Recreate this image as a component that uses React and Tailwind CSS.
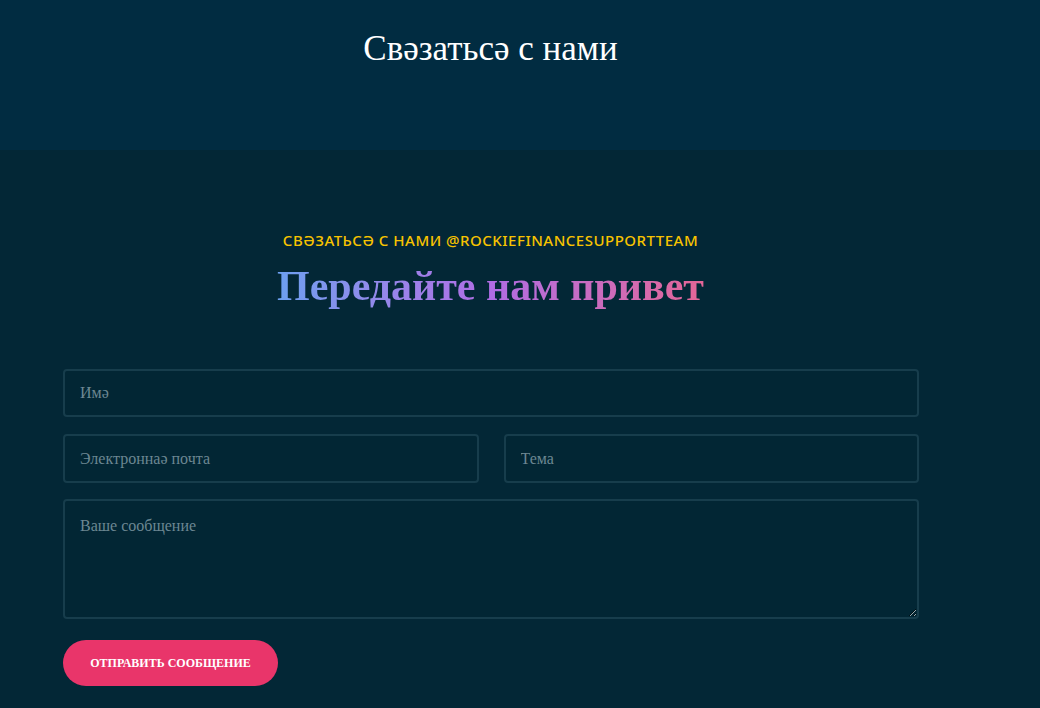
import React from "react";

export default function App() {
  const serif = { fontFamily: '"Liberation Serif", "Times New Roman", serif' };
  const field =
    "w-full rounded-[4px] border-2 border-[#173d4c] bg-[#022634] px-[15px] text-[16px] text-white placeholder:text-[#6c8792] outline-none";
  return (
    <div className="w-[1040px] h-[708px] overflow-hidden bg-[#032736]" style={serif}>
      <header className="h-[150px] w-full bg-[#012c41]">
        <div className="w-[981px] flex justify-center pt-[29px]">
          <h1 className="text-[35px] leading-[40px] text-white font-normal">Свəзатьсə с нами</h1>
        </div>
      </header>
      <section className="w-[1040px] bg-[#032736] pt-[80px]">
        <div className="w-[981px] flex flex-col items-center">
          <p
            className="text-[15px] leading-[20px] font-medium uppercase text-[#f7c300] tracking-[0.5px]"
            style={{ fontFamily: '"Noto Sans", "Open Sans", sans-serif' }}
          >
            Свəзатьсə с нами @rockiefinancesupportteam
          </p>
          <h2 className="mt-[11px] text-[42px] leading-[50px] font-bold bg-gradient-to-r from-[#6b9ff0] via-[#b06ce4] to-[#e46596] bg-clip-text text-transparent">
            Передайте нам привет
          </h2>
        </div>
        <form className="ml-[63px] w-[856px] mt-[58px] flex flex-col">
          <input placeholder="Имə" className={"h-[48px] " + field} style={serif} />
          <div className="mt-[17px] flex gap-[25px]">
            <input placeholder="Электроннаə почта" className={"h-[49px] flex-1 " + field} style={serif} />
            <input placeholder="Тема" className={"h-[49px] flex-1 " + field} style={serif} />
          </div>
          <textarea
            placeholder="Ваше сообщение"
            className={"mt-[16px] h-[120px] pt-[13px] " + field}
            style={serif}
          />
          <div className="mt-[21px]">
            <button
              type="button"
              className="h-[46px] w-[215px] rounded-full bg-[#e9356a] text-white text-[12px] font-bold uppercase"
              style={serif}
            >
              Отправить сообщение
            </button>
          </div>
        </form>
      </section>
    </div>
  );
}
